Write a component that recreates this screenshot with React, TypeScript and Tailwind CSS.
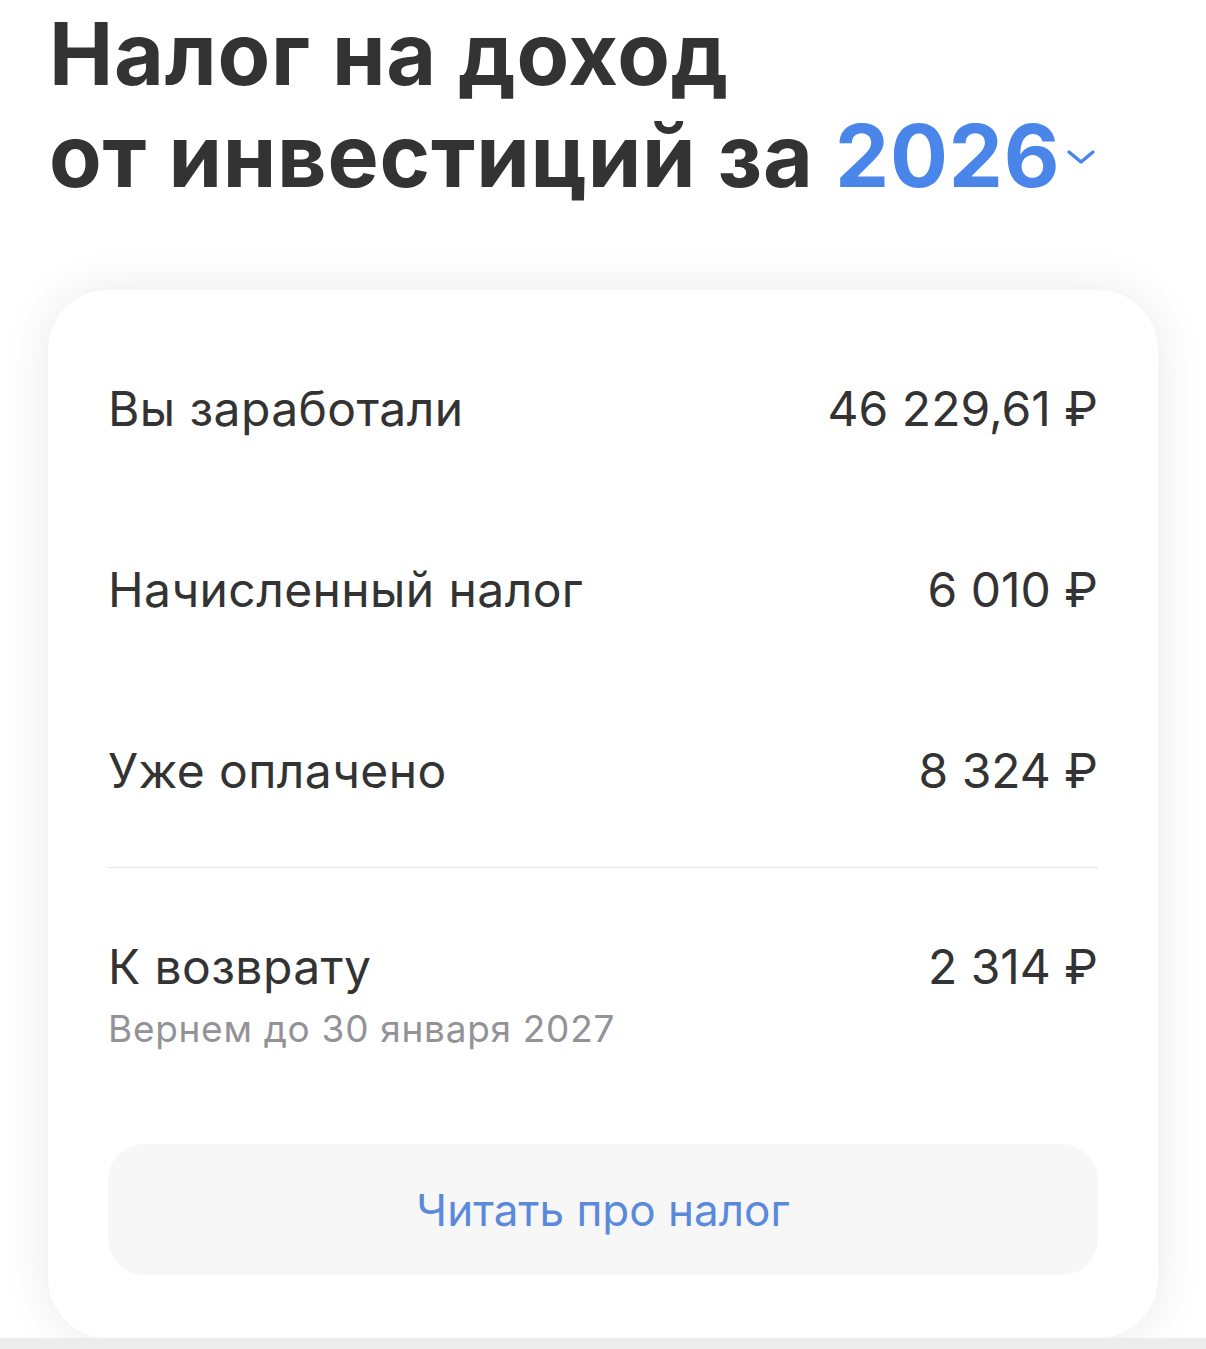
import React from 'react';

const rows = [
  { label: 'Вы заработали', value: '46 229,61 ₽' },
  { label: 'Начисленный налог', value: '6 010 ₽' },
  { label: 'Уже оплачено', value: '8 324 ₽' },
];

export default function App() {
  return (
    <div
      className="w-[1206px] min-h-[1349px] bg-white text-[#333333] flex flex-col"
      style={{ fontFamily: 'Inter, "Noto Sans", sans-serif' }}
    >
      <h1 className="pl-[49px] pt-[3px] text-[86px] leading-[102px] font-bold tracking-[0.8px]">
        Налог на доход
        <br />
        от инвестиций за{' '}
        <span className="text-[#4a85ea]">2026</span>
        <svg
          className="inline-block align-baseline ml-[6px] mb-[22px]"
          width="30"
          height="16"
          viewBox="0 0 30 16"
          fill="none"
        >
          <path
            d="M3 3 L15 13 L27 3"
            stroke="#4a85ea"
            strokeWidth="3.5"
            strokeLinecap="round"
            strokeLinejoin="round"
          />
        </svg>
      </h1>

      {/* card */}
      <div className="mt-[83px] mx-[48px] bg-white rounded-[60px] shadow-[0_0_50px_rgba(0,0,0,0.09)] px-[60px] pt-[28px] pb-[63px]">
        {rows.map((r) => (
          <div key={r.label} className="h-[181px] flex items-center justify-between text-[48px] leading-[58px]">
            <span className="tracking-[0.4px]">{r.label}</span>
            <span>{r.value}</span>
          </div>
        ))}

        <div className="h-px bg-[#e6e6e8] mt-[6px]" />

        <div className="pt-[70px] flex justify-between text-[48px] leading-[58px]">
          <div>
            <div className="tracking-[0.4px]">К возврату</div>
            <div className="mt-[11px] text-[37px] leading-[44px] tracking-[0.7px] text-[#939397]">
              Вернем до 30 января 2027
            </div>
          </div>
          <span>2 314 ₽</span>
        </div>

        <button className="mt-[93px] w-full h-[131px] rounded-[36px] bg-[#f7f7f8] text-[44px] text-[#5a8ad9] flex items-center justify-center">
          Читать про налог
        </button>
      </div>

      <div className="flex-1 bg-[#ececec]" />
    </div>
  );
}
